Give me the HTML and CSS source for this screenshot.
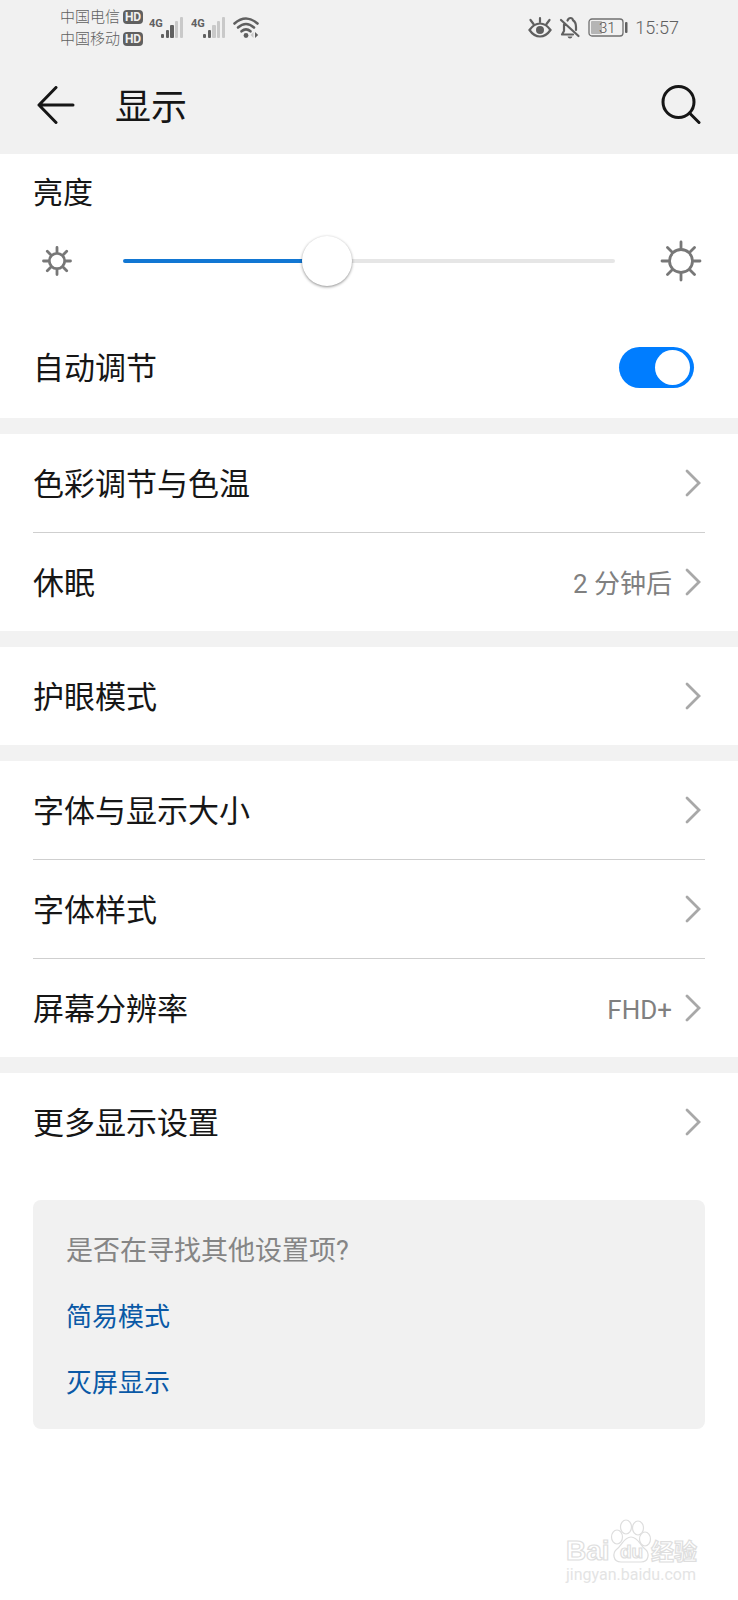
FILE: index.html
```html
<!DOCTYPE html>
<html lang="zh-CN">
<head>
<meta charset="utf-8">
<meta name="viewport" content="width=device-width, initial-scale=1">
<title>显示</title>
<link rel="stylesheet" href="styles.css">
</head>
<body>
<svg class="defs" aria-hidden="true">
  <symbol id="chevron" viewBox="0 0 16 28"><path d="M2 2 14 14 2 26" fill="none" stroke="#a8a8a8" stroke-width="2.8" stroke-linecap="round"/></symbol>
</svg>
<div class="top">
  <div class="status">
    <div class="carriers">
      <div class="carrier">中国电信<span class="hd">HD</span></div>
      <div class="carrier">中国移动<span class="hd">HD</span></div>
    </div>
    <svg class="signal" viewBox="0 0 36 24">
      <text x="0" y="11" class="net">4G</text>
      <g fill="#606060"><rect x="12" y="18" width="3" height="4" rx="1"/><rect x="17" y="14" width="3" height="8" rx="1"/><rect x="21" y="9" width="4" height="13" rx="1"/></g>
      <g fill="#c9c9c9"><rect x="26" y="5" width="3" height="17" rx="1"/><rect x="31" y="1" width="3" height="21" rx="1"/></g>
    </svg>
    <svg class="signal" viewBox="0 0 36 24">
      <text x="0" y="11" class="net">4G</text>
      <g fill="#606060"><rect x="12" y="18" width="3" height="4" rx="1"/><rect x="17" y="14" width="3" height="8" rx="1"/></g>
      <g fill="#c9c9c9"><rect x="21" y="9" width="4" height="13" rx="1"/><rect x="26" y="5" width="3" height="17" rx="1"/><rect x="31" y="1" width="3" height="21" rx="1"/></g>
    </svg>
    <svg class="wifi" viewBox="0 0 26 24">
      <g fill="none" stroke="#606060" stroke-width="2.600" stroke-linecap="round"><path d="M1.500 7.500Q13-2.500 24.500 7.500"/><path d="M5 11.500Q13 4.500 21 11.500"/><path d="M8.500 15.300Q13 11.300 17.500 15.300"/></g>
      <circle cx="13" cy="19.500" r="2.400" fill="#606060"/>
      <path d="M20.500 16v6l-3-3z" fill="#c9c9c9"/><path d="M22 16v6l3.200-3z" fill="#606060"/>
    </svg>
    <div class="status-right">
      <svg class="eye" viewBox="0 0 24 22">
        <g fill="none" stroke="#606060" stroke-width="2.200" stroke-linecap="round"><path d="M1.500 13Q6 6.500 12 6.500T22.500 13Q18 19.500 12 19.500T1.500 13Z"/><path d="M12 5V1.200M5.500 7 2.500 3M18.500 7l3-4"/></g>
        <circle cx="12" cy="13" r="4" fill="#606060"/>
      </svg>
      <svg class="bell" viewBox="0 0 22 24">
        <g fill="none" stroke="#606060" stroke-width="2.200" stroke-linecap="round" stroke-linejoin="round"><path d="M2 4 19.500 20M8.500 4.500Q9.500 2 11.500 2T14 4.200Q17 6 17 11v3M5 8.500V15L3 18.500H14"/></g>
        <path d="M8.500 20.500h5Q13 22.500 11 22.500T8.500 20.500Z" fill="#606060"/>
      </svg>
      <svg class="battery" viewBox="0 0 40 20">
        <rect x="1" y="1" width="34" height="17" rx="3" fill="none" stroke="#707070" stroke-width="1.300"/>
        <rect x="3" y="3" width="11" height="13" rx="1" fill="#b5b5b5"/>
        <rect x="37" y="4" width="2.500" height="11" rx="1" fill="#606060"/>
        <text x="11" y="15" class="charge">31</text>
      </svg>
      <time class="clock">15:57</time>
    </div>
  </div>
  <header class="header">
    <button class="icon-button" aria-label="返回">
      <svg class="back" viewBox="0 0 38 38"><path d="M19 1.500 2 19 19 36.500M2 19H36" fill="none" stroke="#161616" stroke-width="3" stroke-linecap="round" stroke-linejoin="round"/></svg>
    </button>
    <h1 class="title">显示</h1>
    <button class="icon-button" aria-label="搜索">
      <svg class="search" viewBox="0 0 40 40"><circle cx="17.500" cy="17" r="15.500" fill="none" stroke="#161616" stroke-width="3"/><path d="M28.500 28 38 37.500" stroke="#161616" stroke-width="3" stroke-linecap="round"/></svg>
    </button>
  </header>
</div>
<main class="groups">
  <section class="group">
    <label class="caption" for="brightness">亮度</label>
    <div class="brightness">
      <svg class="sun-small" viewBox="-15 -15 30 30"><g fill="none" stroke="#777" stroke-width="2.800" stroke-linecap="round"><circle r="7.700"/><path d="M0-9V-13.500M0 9v4.500M-9 0h-4.500M9 0h4.500M-6.500-6.500-9.700-9.700M6.500-6.500 9.700-9.700M-6.500 6.500-9.700 9.700M6.500 6.500 9.700 9.700"/></g></svg>
      <input class="slider" id="brightness" type="range" min="0" max="1000" value="406">
      <svg class="sun-large" viewBox="-21 -21 42 42"><g fill="none" stroke="#777" stroke-width="2.800" stroke-linecap="round"><circle r="11.500"/><path d="M0-13V-19M0 13v6M-13 0h-6M13 0h6M-9-9-13.500-13.500M9-9 13.500-13.500M-9 9-13.500 13.500M9 9 13.500 13.500"/></g></svg>
    </div>
    <label class="row switch-row"><span class="name">自动调节</span><input class="switch" type="checkbox" role="switch" checked></label>
  </section>
  <section class="group">
    <a class="row" href="#"><span class="name">色彩调节与色温</span><svg class="chevron"><use href="#chevron"/></svg></a>
    <hr class="divider">
    <a class="row" href="#"><span class="name">休眠</span><span class="value">2 分钟后</span><svg class="chevron"><use href="#chevron"/></svg></a>
  </section>
  <section class="group">
    <a class="row" href="#"><span class="name">护眼模式</span><svg class="chevron"><use href="#chevron"/></svg></a>
  </section>
  <section class="group">
    <a class="row" href="#"><span class="name">字体与显示大小</span><svg class="chevron"><use href="#chevron"/></svg></a>
    <hr class="divider">
    <a class="row" href="#"><span class="name">字体样式</span><svg class="chevron"><use href="#chevron"/></svg></a>
    <hr class="divider">
    <a class="row" href="#"><span class="name">屏幕分辨率</span><span class="value">FHD+</span><svg class="chevron"><use href="#chevron"/></svg></a>
  </section>
  <section class="group">
    <a class="row" href="#"><span class="name">更多显示设置</span><svg class="chevron"><use href="#chevron"/></svg></a>
  </section>
</main>
<aside class="suggest">
  <p class="question">是否在寻找其他设置项?</p>
  <a class="link" href="#">简易模式</a>
  <a class="link" href="#">灭屏显示</a>
</aside>
<footer class="footer">
  <svg class="brand" viewBox="0 0 136 68">
    <g fill="#fff" stroke="#dedede" stroke-width="1.200">
      <text x="0" y="41" class="brand-name">Bai</text>
      <ellipse cx="51" cy="18" rx="5.500" ry="7"/><ellipse cx="60" cy="8" rx="5.500" ry="7"/><ellipse cx="72" cy="9" rx="5.500" ry="7"/><ellipse cx="79" cy="20" rx="5.500" ry="7"/>
      <path d="M65 18C58 18 56 26 51 30 46 34 47 43 55 43 60 43 70 43 75 43 83 43 84 34 79 30 74 26 72 18 65 18Z"/>
      <text x="54" y="39" class="brand-du">du</text>
      <text x="85" y="41" class="brand-cn">经验</text>
    </g>
    <text x="0" y="61" class="brand-url">jingyan.baidu.com</text>
  </svg>
</footer>
</body>
</html>
```
FILE: styles.css
```css
* { box-sizing: border-box; }
body {
  margin: 0;
  min-height: 100vh;
  display: flex;
  flex-direction: column;
  background: #fff;
  color: #161616;
  font-family: Roboto, "Noto Sans CJK SC", sans-serif;
}
svg { display: block; flex: none; }
a { color: inherit; text-decoration: none; }
.defs { position: absolute; width: 0; height: 0; }
.top { background: #f1f1f1; }

.status {
  height: 56px;
  display: flex;
  align-items: center;
  padding: 0 59px 0 60px;
  color: #606060;
}
.carriers { margin-right: 6px; }
.carrier {
  display: flex;
  align-items: center;
  gap: 3px;
  font-size: 15px;
  font-weight: 300;
  line-height: 22px;
}
.hd {
  width: 20px;
  border-radius: 4px;
  background: #606060;
  color: #f1f1f1;
  font-size: 12px;
  font-weight: 700;
  line-height: 14px;
  text-align: center;
}
.signal { width: 36px; height: 24px; margin-right: 6px; }
.net { font-size: 11px; font-weight: 700; fill: #606060; }
.wifi { width: 26px; height: 24px; }
.status-right { margin-left: auto; display: flex; align-items: center; gap: 7px; }
.eye { width: 24px; height: 22px; }
.bell { width: 22px; height: 24px; }
.battery { width: 40px; height: 20px; }
.charge { font-size: 15px; font-weight: 300; fill: #505050; }
.clock { font-size: 18px; line-height: 24px; font-weight: 300; }

.header {
  height: 98px;
  display: flex;
  align-items: center;
  padding: 0 37px;
}
.icon-button { padding: 0; border: 0; background: none; color: inherit; }
.back { width: 38px; height: 38px; }
.search { width: 40px; height: 40px; }
.title { flex: 1; margin: 0; padding: 5px 0 0 40px; font-size: 36px; font-weight: 400; line-height: 48px; }

.groups { display: flex; flex-direction: column; gap: 16px; background: #f2f2f2; }
.group { background: #fff; }
.caption { display: block; padding: 15px 33px 0; font-size: 30px; line-height: 48px; }
.brightness {
  height: 88px;
  display: flex;
  align-items: center;
  padding: 0 36px 0 42px;
}
.sun-small { width: 30px; height: 30px; }
.sun-large { width: 42px; height: 42px; }
.slider {
  flex: 1;
  min-width: 0;
  height: 50px;
  margin: 0 45px 0 51px;
  appearance: none;
  background: none;
}
.slider::-webkit-slider-runnable-track {
  height: 4px;
  border-radius: 2px;
  background: linear-gradient(to right, #1277d3 41%, #e6e6e6 41%);
}
.slider::-webkit-slider-thumb {
  appearance: none;
  width: 50px;
  height: 50px;
  margin-top: -23px;
  border-radius: 50%;
  background: #fff;
  box-shadow: 0 1px 3px rgba(0, 0, 0, .45);
}
.row {
  height: 98px;
  display: flex;
  align-items: center;
  padding: 0 37px 0 33px;
}
.switch-row { margin: 13px 0 2px; padding-right: 44px; }
.name { flex: 1; padding-top: 3px; font-size: 31px; line-height: 48px; }
.value { margin-right: 13px; padding-top: 3px; color: #808080; font-size: 26px; line-height: 40px; }
.chevron { width: 16px; height: 28px; }
.divider { height: 1px; margin: 0 33px; border: 0; background: #cfcfcf; }
.switch {
  appearance: none;
  width: 75px;
  height: 41px;
  margin: 0;
  padding: 3px 4px;
  border-radius: 21px;
  background: #007dff;
}
.switch::before {
  content: "";
  display: block;
  width: 35px;
  height: 35px;
  margin-left: auto;
  border-radius: 50%;
  background: #fff;
}

.suggest {
  margin: 29px 33px 0;
  padding: 18px 33px 13px;
  border-radius: 8px;
  background: #f1f1f1;
  font-size: 26px;
  line-height: 66px;
}
.question { margin: 0; color: #858585; font-size: 27px; }
.link { display: block; width: fit-content; color: #0a59a6; }

.footer { margin-top: auto; padding: 0 36px 13px; display: flex; justify-content: flex-end; }
.brand { width: 136px; height: 68px; overflow: visible; }
.brand-name, .brand-du { font-family: "Liberation Sans", sans-serif; font-weight: 700; }
.brand-name { font-size: 28px; }
.brand-du { font-size: 19px; }
.brand-cn { font-size: 23px; font-weight: 700; }
.brand-url { font-size: 16px; fill: #e4e4e4; }
```
